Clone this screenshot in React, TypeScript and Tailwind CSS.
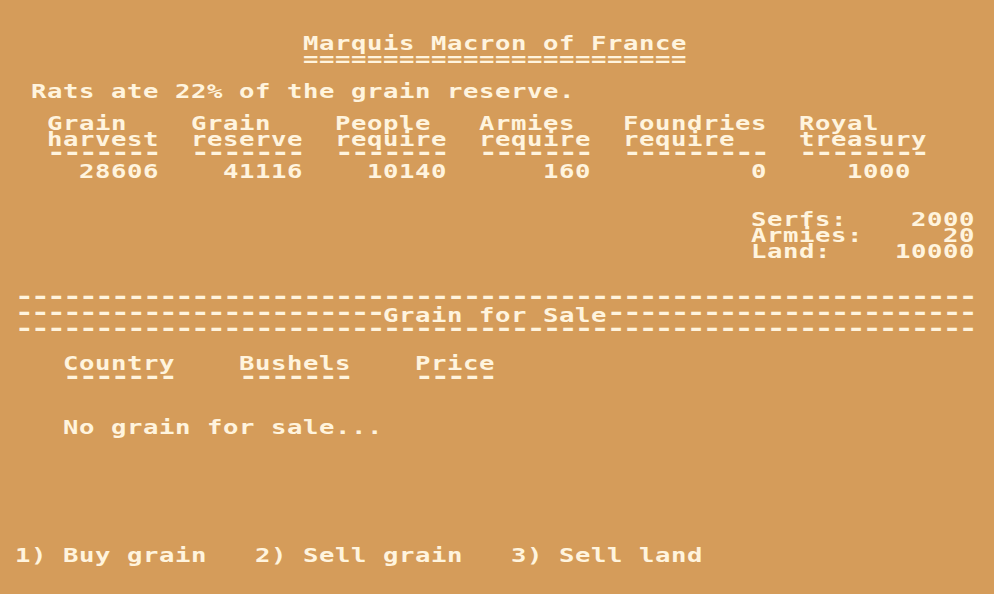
import React from "react";

const S = (n: number) => " ".repeat(n);
const D = (n: number) => "-".repeat(n);

const rows: string[] = [
  S(18) + "Marquis Macron of France",
  S(18) + "========================",
  "",
  " Rats ate 22% of the grain reserve.",
  "",
  "  Grain    Grain    People   Armies   Foundries  Royal",
  "  harvest  reserve  require  require  require    treasury",
  "  -------  -------  -------  -------  ---------  --------",
  "    28606    41116    10140      160          0     1000",
  "",
  "",
  S(46) + "Serfs:    2000",
  S(46) + "Armies:     20",
  S(46) + "Land:    10000",
  "",
  "",
  D(60),
  D(23) + "Grain for Sale" + D(23),
  D(60),
  "",
  "   Country    Bushels    Price",
  "   -------    -------    -----",
  "",
  "",
  "   No grain for sale...",
  "",
  "",
  "",
  "",
  "",
  "",
  "",
  "1) Buy grain   2) Sell grain   3) Sell land",
];

function Line({ text }: { text: string }) {
  const parts = text.split(/(-+)/).filter((p) => p.length > 0);
  return (
    <div className="h-4 leading-4 whitespace-pre">
      {parts.length === 0 ? "\u00a0" : null}
      {parts.map((p, i) =>
        p[0] === "-" ? (
          <span key={i} className="align-[2px] leading-[0px] text-[23px] tracking-[-2px]">
            {p}
          </span>
        ) : (
          <span key={i}>{p}</span>
        )
      )}
    </div>
  );
}

export default function App() {
  return (
    <div className="w-[994px] h-[594px] overflow-hidden bg-[#d59c5a] text-[#fff4de] pl-[15px] pt-[35px]">
      <div className="w-[712px] origin-top-left scale-x-[1.35] flex flex-col font-['DejaVu_Sans_Mono',monospace] font-bold text-[19px] tracking-[0.413px]">
        {rows.map((r, i) => (
          <Line key={i} text={r} />
        ))}
      </div>
    </div>
  );
}
